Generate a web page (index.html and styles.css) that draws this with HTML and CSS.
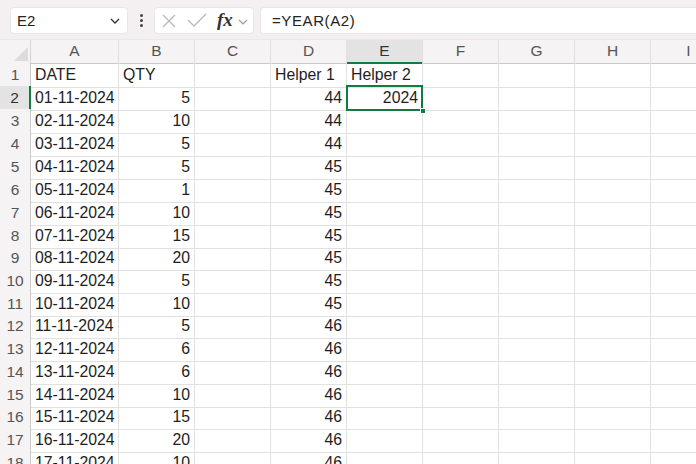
FILE: index.html
```html
<!DOCTYPE html>
<html>
<head>
<meta charset="utf-8">
<link rel="stylesheet" href="styles.css">
</head>
<body>
<div class="topbar">
  <div class="namebox">
    <span class="nb-text">E2</span>
    <svg class="nb-chev" width="10" height="6" viewBox="0 0 10 6"><path d="M1 1 L5 5 L9 1" fill="none" stroke="#333" stroke-width="1.3"/></svg>
  </div>
  <div class="kebab"><i></i><i></i><i></i></div>
  <div class="fbtns">
    <svg class="ic-x" width="14" height="14" viewBox="0 0 14 14"><path d="M1 1 L13 13 M13 1 L1 13" stroke="#b9b9b9" stroke-width="1.3" fill="none"/></svg>
    <svg class="ic-ok" width="20" height="14" viewBox="0 0 20 14"><path d="M1 7 L7 13 L19 1" stroke="#b9b9b9" stroke-width="1.3" fill="none"/></svg>
    <span class="fx">fx</span>
    <svg class="fx-chev" width="10" height="6" viewBox="0 0 10 6"><path d="M1 1 L5 5 L9 1" fill="none" stroke="#999" stroke-width="1.1"/></svg>
  </div>
  <div class="formula">=YEAR(A2)</div>
</div>

<div class="sheet">
  <div class="row hdr">
    <div class="corner"><svg width="14" height="14" viewBox="0 0 14 14"><path d="M14 0 L14 14 L0 14 Z" fill="#dcdcdc"/></svg></div>
    <div class="ch">A</div><div class="ch">B</div><div class="ch">C</div><div class="ch">D</div><div class="ch sel">E</div><div class="ch">F</div><div class="ch">G</div><div class="ch">H</div><div class="ch">I</div>
  </div>
  <div class="row"><div class="rh">1</div><div class="c">DATE</div><div class="c">QTY</div><div class="c"></div><div class="c">Helper 1</div><div class="c">Helper 2</div><div class="c"></div><div class="c"></div><div class="c"></div><div class="c"></div></div>
  <div class="row"><div class="rh sel">2</div><div class="c">01-11-2024</div><div class="c n">5</div><div class="c"></div><div class="c n">44</div><div class="c n active">2024<span class="selbox"></span><span class="handle"></span></div><div class="c"></div><div class="c"></div><div class="c"></div><div class="c"></div></div>
  <div class="row"><div class="rh">3</div><div class="c">02-11-2024</div><div class="c n">10</div><div class="c"></div><div class="c n">44</div><div class="c"></div><div class="c"></div><div class="c"></div><div class="c"></div><div class="c"></div></div>
  <div class="row"><div class="rh">4</div><div class="c">03-11-2024</div><div class="c n">5</div><div class="c"></div><div class="c n">44</div><div class="c"></div><div class="c"></div><div class="c"></div><div class="c"></div><div class="c"></div></div>
  <div class="row"><div class="rh">5</div><div class="c">04-11-2024</div><div class="c n">5</div><div class="c"></div><div class="c n">45</div><div class="c"></div><div class="c"></div><div class="c"></div><div class="c"></div><div class="c"></div></div>
  <div class="row"><div class="rh">6</div><div class="c">05-11-2024</div><div class="c n">1</div><div class="c"></div><div class="c n">45</div><div class="c"></div><div class="c"></div><div class="c"></div><div class="c"></div><div class="c"></div></div>
  <div class="row"><div class="rh">7</div><div class="c">06-11-2024</div><div class="c n">10</div><div class="c"></div><div class="c n">45</div><div class="c"></div><div class="c"></div><div class="c"></div><div class="c"></div><div class="c"></div></div>
  <div class="row short"><div class="rh">8</div><div class="c">07-11-2024</div><div class="c n">15</div><div class="c"></div><div class="c n">45</div><div class="c"></div><div class="c"></div><div class="c"></div><div class="c"></div><div class="c"></div></div>
  <div class="row"><div class="rh">9</div><div class="c">08-11-2024</div><div class="c n">20</div><div class="c"></div><div class="c n">45</div><div class="c"></div><div class="c"></div><div class="c"></div><div class="c"></div><div class="c"></div></div>
  <div class="row"><div class="rh">10</div><div class="c">09-11-2024</div><div class="c n">5</div><div class="c"></div><div class="c n">45</div><div class="c"></div><div class="c"></div><div class="c"></div><div class="c"></div><div class="c"></div></div>
  <div class="row short"><div class="rh">11</div><div class="c">10-11-2024</div><div class="c n">10</div><div class="c"></div><div class="c n">45</div><div class="c"></div><div class="c"></div><div class="c"></div><div class="c"></div><div class="c"></div></div>
  <div class="row"><div class="rh">12</div><div class="c">11-11-2024</div><div class="c n">5</div><div class="c"></div><div class="c n">46</div><div class="c"></div><div class="c"></div><div class="c"></div><div class="c"></div><div class="c"></div></div>
  <div class="row"><div class="rh">13</div><div class="c">12-11-2024</div><div class="c n">6</div><div class="c"></div><div class="c n">46</div><div class="c"></div><div class="c"></div><div class="c"></div><div class="c"></div><div class="c"></div></div>
  <div class="row"><div class="rh">14</div><div class="c">13-11-2024</div><div class="c n">6</div><div class="c"></div><div class="c n">46</div><div class="c"></div><div class="c"></div><div class="c"></div><div class="c"></div><div class="c"></div></div>
  <div class="row short"><div class="rh">15</div><div class="c">14-11-2024</div><div class="c n">10</div><div class="c"></div><div class="c n">46</div><div class="c"></div><div class="c"></div><div class="c"></div><div class="c"></div><div class="c"></div></div>
  <div class="row"><div class="rh">16</div><div class="c">15-11-2024</div><div class="c n">15</div><div class="c"></div><div class="c n">46</div><div class="c"></div><div class="c"></div><div class="c"></div><div class="c"></div><div class="c"></div></div>
  <div class="row"><div class="rh">17</div><div class="c">16-11-2024</div><div class="c n">20</div><div class="c"></div><div class="c n">46</div><div class="c"></div><div class="c"></div><div class="c"></div><div class="c"></div><div class="c"></div></div>
  <div class="row"><div class="rh">18</div><div class="c">17-11-2024</div><div class="c n">10</div><div class="c"></div><div class="c n">46</div><div class="c"></div><div class="c"></div><div class="c"></div><div class="c"></div><div class="c"></div></div>
</div>
</body>
</html>
```

FILE: styles.css
```css
* { box-sizing: border-box; }
html, body {
  margin: 0;
  padding: 0;
  width: 696px;
  height: 464px;
  overflow: hidden;
  background: #ffffff;
  font-family: "Liberation Sans", Arial, sans-serif;
}

.topbar {
  height: 40px;
  background: #f4eff0;
  display: flex;
  align-items: flex-start;
  padding: 7px 0 0 10px;
  border-bottom: 1px solid #efe6e8;
}

.namebox {
  width: 118px;
  height: 27px;
  background: #fff;
  border-radius: 4px;
  border: 1px solid #ebe5e6;
  display: flex;
  align-items: center;
  justify-content: space-between;
  padding: 0 7px 0 6px;
}
.nb-text {
  font-size: 15px;
  color: #222;
}

.kebab {
  width: 26px;
  height: 27px;
  display: flex;
  flex-direction: column;
  align-items: center;
  justify-content: center;
  gap: 2px;
}
.kebab i {
  display: block;
  width: 3px;
  height: 3px;
  border-radius: 50%;
  background: #444;
}

.fbtns {
  width: 100px;
  height: 27px;
  background: #fff;
  border-radius: 4px;
  border: 1px solid #ebe5e6;
  display: flex;
  align-items: center;
  padding-left: 7px;
}
.ic-x { flex: none; }
.ic-ok { flex: none; margin-left: 11px; margin-top: -1px; }
.fx {
  font-family: "Liberation Serif", "Times New Roman", serif;
  font-style: italic;
  font-weight: bold;
  font-size: 19px;
  color: #333;
  margin-left: 10px;
  margin-top: -2px;
  letter-spacing: 0px;
}
.fx-chev { margin-left: 5px; margin-top: 2px; }

.formula {
  margin-left: 6px;
  flex: 1;
  height: 27px;
  background: #fff;
  border-radius: 4px 0 0 4px;
  border: 1px solid #ebe5e6;
  border-right: none;
  font-size: 15px;
  color: #222;
  line-height: 25px;
  padding-left: 11px;
  letter-spacing: 0.6px;
}

.sheet {
  display: flex;
  flex-direction: column;
}

.row {
  display: grid;
  grid-template-columns: 31px 88px 76px 76px 76px 76px 76px 76px 76px 76px;
  height: 23px;
}
.row.short { height: 22px; }
.row.hdr {
  height: 23px;
  background: #f5f3f3;
}

.corner {
  border-right: 1px solid #d4d4d4;
  border-bottom: 1px solid #c9c9c9;
  display: flex;
  align-items: flex-end;
  justify-content: flex-end;
  padding: 0 2px 2px 0;
}

.ch {
  font-size: 15.5px;
  color: #555;
  text-align: center;
  line-height: 22px;
  border-bottom: 1px solid #c9c9c9;
  border-right: 1px solid #e2e0e0;
}
.ch.sel {
  background: #e3e3e3;
  color: #333;
  border-bottom: 2px solid #107c41;
}

.rh {
  font-size: 15.5px;
  color: #555;
  text-align: center;
  line-height: 24px;
  background: #f5f3f3;
  border-right: 1px solid #c9c9c9;
  border-bottom: 1px solid #e2e0e0;
}
.rh.sel {
  background: #e3e3e3;
  color: #333;
  border-right: 2px solid #107c41;
}

.c {
  font-size: 15.8px;
  color: #1e1e1e;
  line-height: 24px;
  padding: 0 3px 0 4px;
  border-right: 1px solid #e1e1e1;
  border-bottom: 1px solid #e1e1e1;
  white-space: nowrap;
  overflow: hidden;
}
.c.n { text-align: right; padding-right: 4px; }

.c.active {
  position: relative;
  overflow: visible;
}
.selbox {
  position: absolute;
  left: -1px;
  top: -1px;
  right: -1px;
  bottom: -1px;
  border: 2px solid #107c41;
}
.handle {
  position: absolute;
  right: -4px;
  bottom: -4px;
  width: 6px;
  height: 6px;
  background: #107c41;
  border: 1px solid #fff;
  z-index: 2;
}
```
